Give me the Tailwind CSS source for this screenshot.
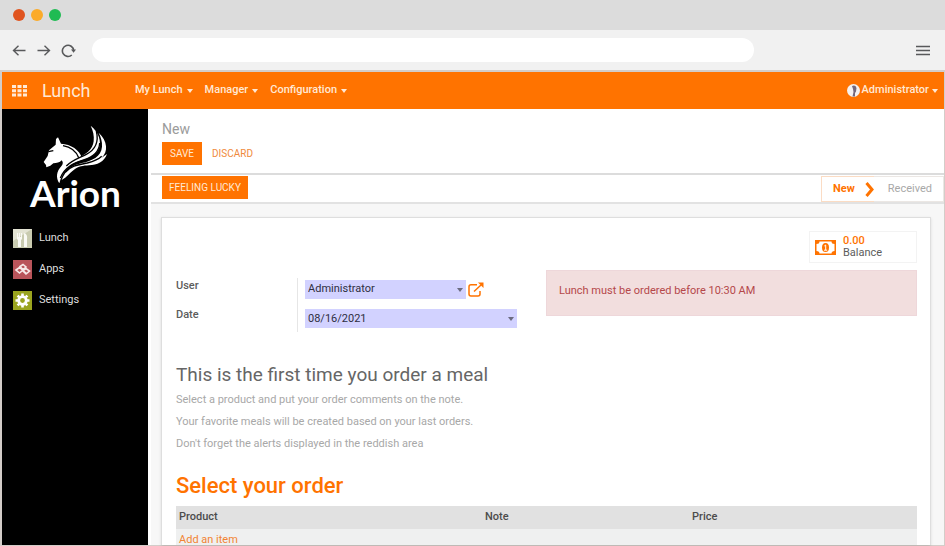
<!DOCTYPE html>
<html lang="en">
<head>
<meta charset="UTF-8" />
<meta name="viewport" content="width=device-width, initial-scale=1.0"/>
<title>Lunch - Arion</title>
<script src="https://cdn.jsdelivr.net/npm/@tailwindcss/browser@4"></script>
</head>
<body class="flex flex-col h-screen overflow-hidden bg-white font-['Roboto',sans-serif] text-[11px] text-[#5c5c5c]">

<!-- Browser frame -->
<div class="flex items-center gap-[6px] h-[30px] shrink-0 px-[13px] bg-[#dcdcdc]">
  <span class="size-3 rounded-full bg-[#e0541f]"></span>
  <span class="size-3 rounded-full bg-[#fbab2a]"></span>
  <span class="size-3 rounded-full bg-[#1fbb53]"></span>
</div>
<div class="flex items-center h-10 shrink-0 pl-3 pr-[15px] bg-[#f1f1f1] text-[#58595b]">
  <button aria-label="Back"><svg class="size-[14px]" viewBox="0 0 14 14" fill="none" stroke="currentColor" stroke-width="1.4"><path d="M13.5 7.500H1.500M6.500 2.700L1.500 7.500l5 4.800"/></svg></button>
  <button aria-label="Forward" class="ml-[11px]"><svg class="size-[14px]" viewBox="0 0 14 14" fill="none" stroke="currentColor" stroke-width="1.4"><path d="M.5 7.500h12M7.500 2.700L12.500 7.500l-5 4.800"/></svg></button>
  <button aria-label="Reload" class="ml-[10px]"><svg class="size-[15px]" viewBox="0 0 15 15" fill="none" stroke="currentColor" stroke-width="1.6"><path d="M10.800 12A5.600 5.600 0 1 1 12.600 7.500"/><path d="M10 6.400h5l-2.400 3.400z" fill="currentColor" stroke="none"/></svg></button>
  <input type="text" aria-label="Address" class="w-[662px] min-w-0 h-6 ml-4 px-3 rounded-full bg-white outline-none">
  <button aria-label="Menu" class="ml-auto"><svg class="w-[14px] h-3" viewBox="0 0 14 12" stroke="currentColor" stroke-width="1.4"><path d="M0 2.500h14M0 6.500h14M0 10.500h14"/></svg></button>
</div>

<div class="flex flex-col flex-1 min-h-0 border-2 border-b border-r border-[#d3cdc9]">

  <!-- Top menu -->
  <nav class="flex items-center h-[37px] shrink-0 pl-[10px] pr-[6px] bg-[#ff7300] text-[#ffe9d6]">
    <button aria-label="Apps"><svg class="w-[15px] h-3" viewBox="0 0 15 12" fill="currentColor"><path d="M0 0h4v3H0zM5.500 0h4v3h-4zM11 0h4v3h-4zM0 4.200h4v3H0zM5.500 4.200h4v3h-4zM11 4.200h4v3h-4zM0 8.400h4v3H0zM5.500 8.400h4v3h-4zM11 8.400h4v3h-4z"/></svg></button>
    <a href="#" class="w-[93px] ml-[15px] text-[18px]">Lunch</a>
    <div class="flex gap-3 font-medium">
      <button class="flex items-center gap-1">My Lunch <svg class="w-[6px] h-[4px] mt-px" viewBox="0 0 6 4" fill="currentColor"><path d="M0 0h6L3 4z"/></svg></button>
      <button class="flex items-center gap-1">Manager <svg class="w-[6px] h-[4px] mt-px" viewBox="0 0 6 4" fill="currentColor"><path d="M0 0h6L3 4z"/></svg></button>
      <button class="flex items-center gap-1">Configuration <svg class="w-[6px] h-[4px] mt-px" viewBox="0 0 6 4" fill="currentColor"><path d="M0 0h6L3 4z"/></svg></button>
    </div>
    <button class="flex items-center ml-auto font-medium">
      <svg class="size-[13px] mr-[2px]" viewBox="0 0 13 13"><circle cx="6.500" cy="6.500" r="6.500" fill="#f4f1f0"/><path d="M5 2q3.500-1.500 4.500 2L9 7.500 8 9v3.500H5.500L6.500 8 6 5z" fill="#74687c"/></svg>
      Administrator
      <svg class="w-[6px] h-[4px] mt-px ml-[3px]" viewBox="0 0 6 4" fill="currentColor"><path d="M0 0h6L3 4z"/></svg>
    </button>
  </nav>

  <div class="flex flex-1 min-h-0">

    <!-- Sidebar -->
    <aside class="w-[146px] shrink-0 bg-black text-[#dedede]">
      <div class="relative h-[103px] pt-[62px] pl-7 text-white">
        <p class="font-['Lato',sans-serif] text-[37px] leading-[44px] font-bold">Arion</p>
        <svg class="absolute left-[26px] top-[11px] w-24 h-16" viewBox="0 0 288 192" aria-hidden="true">
          <g fill="#fff">
            <path d="M47 126l12-18 4-17 20-17 1-17 6-5 9 19c30 2 56 18 63 44-20 9-34 18-46 32-11 12-17 25-22 43-11-18-9-36 7-53 5-6 4-11 0-16-6 7-15 9-25 9l-9 7-12 5-1-7z"/>
            <path d="M188 17c24 19 34 47 24 70-10 21-33 29-55 35-31 9-52 28-62 57-2-31 20-50 46-61 33-14 53-28 56-54 2-17-2-32-9-47z"/>
            <path d="M212 38c27 25 29 57 9 75l16-11c-8 24-30 33-54 34-18 1-31 3-45 13-13 9-21 22-37 31 12-31 33-45 61-51 29-7 58-18 60-49 1-15-3-28-10-42z"/>
          </g>
          <g fill="none" stroke="#000" stroke-width="4">
            <path d="M97 174c14-33 39-44 70-54 31-10 47-25 48-51"/>
            <path d="M205 33c7 29-1 55-30 70-21 11-43 17-60 35"/>
            <path d="M105 77c23 4 39 16 47 36M61 95l15-3"/>
            <path d="M112 157c19-22 43-23 66-28 20-5 34-11 43-20"/>
          </g>
        </svg>
      </div>
      <ul class="mt-4 pl-[11px] space-y-[11px]">
        <li><a href="#" class="flex items-center gap-[7px] h-5">
          <svg class="size-[19px]" viewBox="0 0 19 19"><path fill="#c9cbb0" d="M0 0h19v19H0z"/><path fill="#e3e3d3" d="M0 0h19L0 12z"/><path fill="#fafaf5" d="M4 4h1v4h1V4h1v4h1V4h1v6l-1 1v7H5v-7l-1-1zM11 4q4 1 3 7v7h-3z"/></svg>
          Lunch</a></li>
        <li><a href="#" class="flex items-center gap-[7px] h-5">
          <svg class="size-[19px]" viewBox="0 0 19 19"><path fill="#b9545a" d="M0 0h19v19H0z"/><path d="M3 10l3.500-2.500L10 10l-3.500 3zM7 6.500L10 4.500l3 2.500-3 2.500zM10 11l3-2.500 3.500 2.500-3.500 3zM6.500 7.500l7 6" fill="none" stroke="#f7e9e8" stroke-width="1.600"/></svg>
          Apps</a></li>
        <li><a href="#" class="flex items-center gap-[7px] h-5">
          <svg class="size-[19px]" viewBox="0 0 19 19"><path fill="#9aa41f" d="M0 0h19v19H0z"/><circle cx="9.500" cy="9.500" r="3.800" fill="none" stroke="#fff" stroke-width="2.800"/><path d="M9.500 2.500v2.500M9.500 14v2.500M2.500 9.500H5M14 9.500h2.500M4.600 4.600l1.600 1.600M12.800 12.800l1.600 1.600M14.400 4.600l-1.600 1.600M4.600 14.400l1.600-1.600" stroke="#fff" stroke-width="2.600"/></svg>
          Settings</a></li>
      </ul>
    </aside>

    <!-- Order form -->
    <main class="flex flex-col flex-1 min-w-0 ml-[3px] bg-[#f7f7f7]">
      <header class="h-[66px] shrink-0 px-[11px] pt-[11px] bg-white border-b-2 border-[#dcdcdc]">
        <h1 class="text-[14px] leading-[18px] text-[#9b9b9b]">New</h1>
        <div class="flex gap-[10px] mt-1 text-[10px]">
          <button class="w-10 h-[23px] bg-[#ff7300] text-[#ffe9d6]">SAVE</button>
          <button class="text-[#f08a3c]">DISCARD</button>
        </div>
      </header>

      <div class="flex items-start justify-between h-[29px] shrink-0 pl-[11px] pt-px bg-white border-b-2 border-[#e2e2e2]">
        <button class="w-[86px] h-[23px] bg-[#ff7300] text-[10px] text-[#ffe9d6]">FEELING LUCKY</button>
        <div class="flex items-center h-[26px] border border-l-0 border-[#ebe7e4]">
          <span class="flex items-center h-[26px] pl-[11px] border border-r-0 border-[#fbdcc4] font-bold text-[#ff7300]">New
            <svg class="w-[9px] h-[15px] ml-[10px]" viewBox="0 0 9 15" fill="none" stroke="currentColor" stroke-width="3"><path d="M1.500 1L7 7.500l-5.500 6.500"/></svg>
          </span>
          <span class="pl-[14px] pr-[11px] text-[#a8a8a8]">Received</span>
        </div>
      </div>

      <section class="flex-1 min-h-0 overflow-hidden mt-[13px] ml-[10px] mr-[13px] pl-[14px] pr-[13px] pt-[13px] bg-white border border-b-0 border-[#dedede] shadow-sm">
        <div class="flex items-center w-[108px] h-8 ml-auto pl-[5px] gap-[7px] border border-[#f3f3f3] leading-[12px]">
          <svg class="w-[21px] h-[15px] shrink-0" viewBox="0 0 21 15"><path fill="#ff7300" d="M0 0h21v15H0z"/><path fill="#fff" d="M4.500 1.500h12q0 2.500 3 2.500v7q-3 0-3 2.500h-12q0-2.500-3-2.500V4q3 0 3-2.500z"/><ellipse cx="10.500" cy="7.500" rx="3.500" ry="4.500" fill="#ff7300"/><path d="M9.300 6l1.400-1v5M9 10.200h3.200" stroke="#fff" fill="none"/></svg>
          <div><b class="block text-[#ff7300] font-medium">0.00</b>Balance</div>
        </div>

        <div class="flex mt-[7px]">
          <div class="grid grid-cols-[121px_1fr] w-[341px] shrink-0">
            <div class="space-y-[15px] pt-[9px] font-medium leading-[14px]">
              <label for="user" class="block">User</label>
              <label for="date" class="block">Date</label>
            </div>
            <div class="mt-2 pl-[7px] pt-[2px] border-l border-[#e6e6e6] h-[54px] space-y-[10px]">
              <div class="flex items-center gap-[2px]">
                <div class="relative w-[161px]">
                  <select id="user" class="block appearance-none w-full h-[19px] pl-[3px] bg-[#d2d2ff] text-[#2f2f3f]"><option>Administrator</option></select>
                  <svg class="absolute right-[3px] top-2 w-[6px] h-[4px] text-[#6b6b80]" viewBox="0 0 6 4" fill="currentColor"><path d="M0 0h6L3 4z"/></svg>
                </div>
                <button aria-label="Open user"><svg class="w-4 h-[15px]" viewBox="0 0 16 15" fill="none" stroke="#ff7300" stroke-width="1.500"><path d="M9 2.700H3Q1 2.700 1 4.700V12q0 2 2 2h7q2 0 2-2V9M6 9.500L13 3" /><path d="M10 .5h5.500V6z" fill="#ff7300" stroke="none"/></svg></button>
              </div>
              <div class="relative w-[212px]">
                <input id="date" type="text" value="08/16/2021" class="block w-full h-[19px] pl-[3px] bg-[#d2d2ff] text-[#2f2f3f] outline-none">
                <svg class="absolute right-[3px] top-2 w-[6px] h-[4px] text-[#6b6b80]" viewBox="0 0 6 4" fill="currentColor"><path d="M0 0h6L3 4z"/></svg>
              </div>
            </div>
          </div>
          <div class="flex-1 h-[46px] ml-[29px] px-3 pt-3 bg-[#f2dede] border border-[#eed7da] text-[#b5484a]">Lunch must be ordered before 10:30 AM</div>
        </div>

        <h2 class="mt-[31px] text-[19px] leading-6 text-[#666]">This is the first time you order a meal</h2>
        <div class="mt-[6px] space-y-2 leading-[14px] text-[#a8a8a8]">
          <p>Select a product and put your order comments on the note.</p>
          <p>Your favorite meals will be created based on your last orders.</p>
          <p>Don't forget the alerts displayed in the reddish area</p>
        </div>

        <h2 class="mt-[21px] text-[22px] leading-7 font-medium text-[#ff7300]">Select your order</h2>
        <table class="w-full mt-[6px] table-fixed">
          <thead class="bg-[#e1e1e1] text-left text-[#4c4c4c]">
            <tr class="h-[23px]">
              <th class="w-[306px] pl-[3px] font-medium">Product</th>
              <th class="w-[206px] pl-[3px] font-medium">Note</th>
              <th class="pl-[4px] font-medium">Price</th>
            </tr>
          </thead>
          <tbody class="bg-[#eff0f0]">
            <tr class="h-[23px]"><td colspan="3" class="pl-[3px]"><a href="#" class="text-[#f28433]">Add an item</a></td></tr>
          </tbody>
        </table>
      </section>
    </main>
  </div>
</div>

</body>
</html>
